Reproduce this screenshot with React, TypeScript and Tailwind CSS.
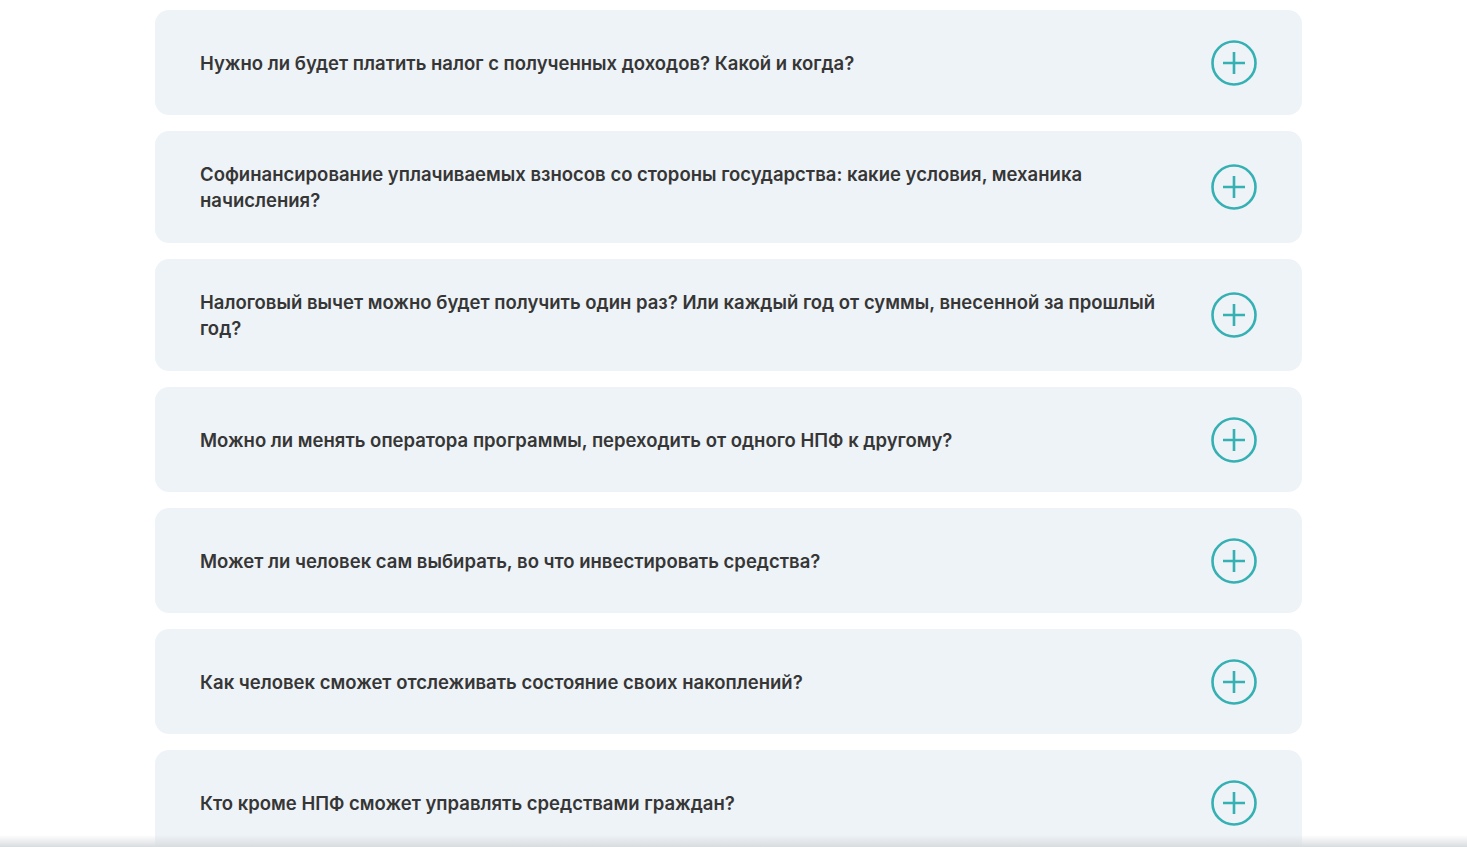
import React from "react";

const questions: string[] = [
  "Нужно ли будет платить налог с полученных доходов? Какой и когда?",
  "Софинансирование уплачиваемых взносов со стороны государства: какие условия, механика начисления?",
  "Налоговый вычет можно будет получить один раз? Или каждый год от суммы, внесенной за прошлый год?",
  "Можно ли менять оператора программы, переходить от одного НПФ к другому?",
  "Может ли человек сам выбирать, во что инвестировать средства?",
  "Как человек сможет отслеживать состояние своих накоплений?",
  "Кто кроме НПФ сможет управлять средствами граждан?",
];

const PlusIcon: React.FC = () => (
  <svg width="46" height="46" viewBox="0 0 46 46" fill="none">
    <circle cx="23" cy="23" r="21.5" stroke="#35b0b3" strokeWidth="2.6" />
    <path d="M23 12v22M12 23h22" stroke="#35b0b3" strokeWidth="2.6" />
  </svg>
);

const FaqItem: React.FC<{ text: string }> = ({ text }) => (
  <li className="flex items-center rounded-[14px] bg-[#eef3f7] pl-[45px] pr-[45px] py-[30px]">
    <div className="flex-1">
      <p className="max-w-[968px] text-[18.5px] leading-[26px] font-semibold text-[#363636]">
        {text}
      </p>
    </div>
    <div className="shrink-0 h-[45px] flex items-center">
      <PlusIcon />
    </div>
  </li>
);

export default function App() {
  return (
    <div
      className="relative h-[847px] overflow-hidden bg-white"
      style={{ fontFamily: "Inter, 'Noto Sans', sans-serif" }}
    >
      <ul className="ml-[155px] w-[1147px] pt-[10px] flex flex-col gap-4">
        {questions.map((q) => (
          <FaqItem key={q} text={q} />
        ))}
      </ul>
      <div className="absolute bottom-0 left-0 right-0 h-[12px] bg-gradient-to-b from-transparent to-[#d9dcdf]" />
    </div>
  );
}
